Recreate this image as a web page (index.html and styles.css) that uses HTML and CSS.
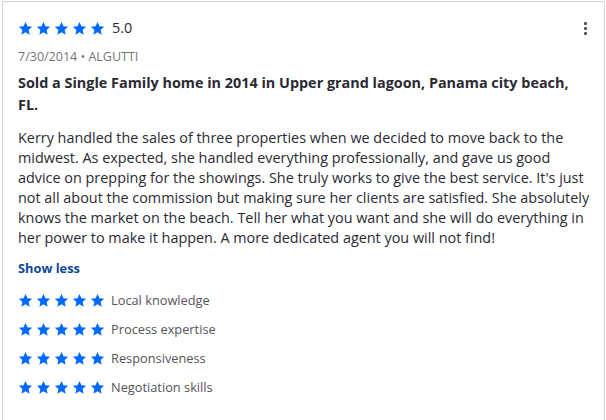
FILE: index.html
```html
<!DOCTYPE html>
<html>
<head>
<meta charset="utf-8">
<link rel="stylesheet" href="styles.css">
</head>
<body>
<svg width="0" height="0" class="defs">
  <defs>
    <symbol id="star" viewBox="0 0 24 24">
      <path d="M12 1.6l3.1 6.9 7.5.8-5.6 5.1 1.6 7.4L12 18l-6.6 3.8 1.6-7.4L1.4 9.3l7.5-.8z"/>
    </symbol>
  </defs>
</svg>
<div class="card">
  <div class="head">
    <div class="stars big">
      <svg><use href="#star"/></svg><svg><use href="#star"/></svg><svg><use href="#star"/></svg><svg><use href="#star"/></svg><svg><use href="#star"/></svg>
      <span class="score">5.0</span>
    </div>
    <button class="more" aria-label="More"><span></span><span></span><span></span></button>
  </div>
  <div class="meta">7/30/2014 • ALGUTTI</div>
  <h3 class="title">Sold a Single Family home in 2014 in Upper grand lagoon, Panama city beach, FL.</h3>
  <p class="body">Kerry handled the sales of three properties when we decided to move back to the midwest. As expected, she handled everything professionally, and gave us good advice on prepping for the showings. She truly works to give the best service. It's just not all about the commission but making sure her clients are satisfied. She absolutely knows the market on the beach. Tell her what you want and she will do everything in her power to make it happen. A more dedicated agent you will not find!</p>
  <a class="toggle" href="#">Show less</a>
  <ul class="subs">
    <li><span class="stars"><svg><use href="#star"/></svg><svg><use href="#star"/></svg><svg><use href="#star"/></svg><svg><use href="#star"/></svg><svg><use href="#star"/></svg></span><span class="label">Local knowledge</span></li>
    <li><span class="stars"><svg><use href="#star"/></svg><svg><use href="#star"/></svg><svg><use href="#star"/></svg><svg><use href="#star"/></svg><svg><use href="#star"/></svg></span><span class="label">Process expertise</span></li>
    <li><span class="stars"><svg><use href="#star"/></svg><svg><use href="#star"/></svg><svg><use href="#star"/></svg><svg><use href="#star"/></svg><svg><use href="#star"/></svg></span><span class="label">Responsiveness</span></li>
    <li><span class="stars"><svg><use href="#star"/></svg><svg><use href="#star"/></svg><svg><use href="#star"/></svg><svg><use href="#star"/></svg><svg><use href="#star"/></svg></span><span class="label">Negotiation skills</span></li>
  </ul>
</div>
</body>
</html>
```
FILE: styles.css
```css
html, body {
  margin: 0;
  padding: 0;
  background: #fff;
}
body {
  font-family: "Open Sans", "Liberation Sans", sans-serif;
  color: #2a2a33;
  padding: 1px 1px 0 2px;
}
.defs {
  position: absolute;
  width: 0;
  height: 0;
}
.card {
  border: 1px solid #d1d1d5;
  border-bottom: none;
  border-radius: 2px 2px 0 0;
  padding: 13px 11px 30px 15px;
  height: 420px;
  box-sizing: border-box;
}
.head {
  display: flex;
  justify-content: space-between;
  align-items: center;
  height: 26px;
}
.stars {
  display: flex;
  align-items: center;
  gap: 3px;
  fill: #006aff;
}
.stars svg {
  width: 15px;
  height: 15px;
}
.score {
  margin-left: 4px;
  font-size: 14.4px;
  color: #2a2a33;
  line-height: 20px;
}
.more {
  display: flex;
  flex-direction: column;
  gap: 2px;
  border: 0;
  background: none;
  padding: 0;
  margin-right: 5px;
  width: 4px;
}
.more span {
  width: 3px;
  height: 3px;
  background: #54545a;
  border-radius: 1px;
}
.meta {
  font-size: 12.5px;
  color: #767676;
  margin-top: 8px;
  line-height: 16px;
}
.title {
  font-size: 14.4px;
  font-weight: 700;
  line-height: 22px;
  margin: 7px 0 0;
  padding-right: 14px;
}
.body {
  font-size: 14.4px;
  line-height: 20px;
  margin: 12px 0 0;
}
.toggle {
  display: block;
  width: fit-content;
  font-size: 12.8px;
  font-weight: 700;
  color: #0d4599;
  text-decoration: none;
  line-height: 18px;
  margin-top: 11px;
}
.subs {
  list-style: none;
  margin: 13px 0 0;
  padding: 0;
  display: flex;
  flex-direction: column;
  gap: 9px;
}
.subs li {
  display: flex;
  align-items: center;
  height: 20px;
}
.subs .label {
  margin-left: 6px;
  font-size: 12.8px;
  color: #54545a;
}
```
